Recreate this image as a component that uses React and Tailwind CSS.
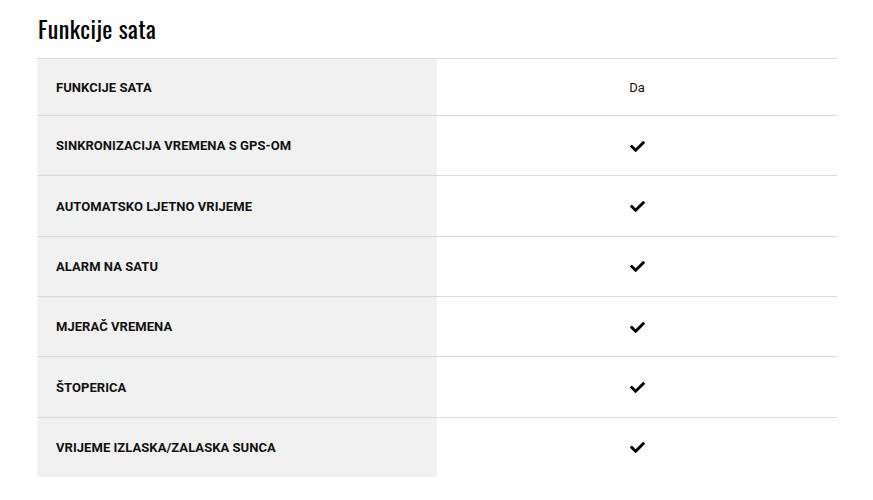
import React from 'react';
import { FaCheck } from 'react-icons/fa';

const rows = [
  { label: 'Funkcije sata', value: 'Da' },
  { label: 'Sinkronizacija vremena s GPS-om', value: true },
  { label: 'Automatsko ljetno vrijeme', value: true },
  { label: 'Alarm na satu', value: true },
  { label: 'Mjerač vremena', value: true },
  { label: 'Štoperica', value: true },
  { label: 'Vrijeme izlaska/zalaska sunca', value: true },
];

const App = () => {
  return (
    <div className="bg-white w-[873px] h-[500px] pl-[37px] pt-[13px] font-['Roboto',sans-serif]">
      <h2 className="font-['Oswald','Liberation_Sans_Narrow','DejaVu_Sans_Condensed',sans-serif] text-[24px] leading-[30px] text-black pl-px tracking-[0.4px]">
        Funkcije sata
      </h2>

      {/* Spec table */}
      <div className="w-[800px] mt-[15px]">
        {rows.map((row, i) => (
          <div
            key={row.label}
            className={`flex border-t border-[#dcdcdc] ${i === 0 ? 'h-[57px]' : 'h-[60.34px]'}`}
          >
            <div className="w-[400px] bg-[#f1f1f1] flex items-center pl-[19px] pt-px text-[13px] font-bold uppercase text-[#111] tracking-[0.05px]">
              {row.label}
            </div>
            <div className="w-[400px] flex items-center justify-center pt-px text-[13px] text-[#111]">
              {row.value === true ? <FaCheck className="w-[15px] h-[15px] text-black" /> : row.value}
            </div>
          </div>
        ))}
      </div>
    </div>
  );
};

export default App;
